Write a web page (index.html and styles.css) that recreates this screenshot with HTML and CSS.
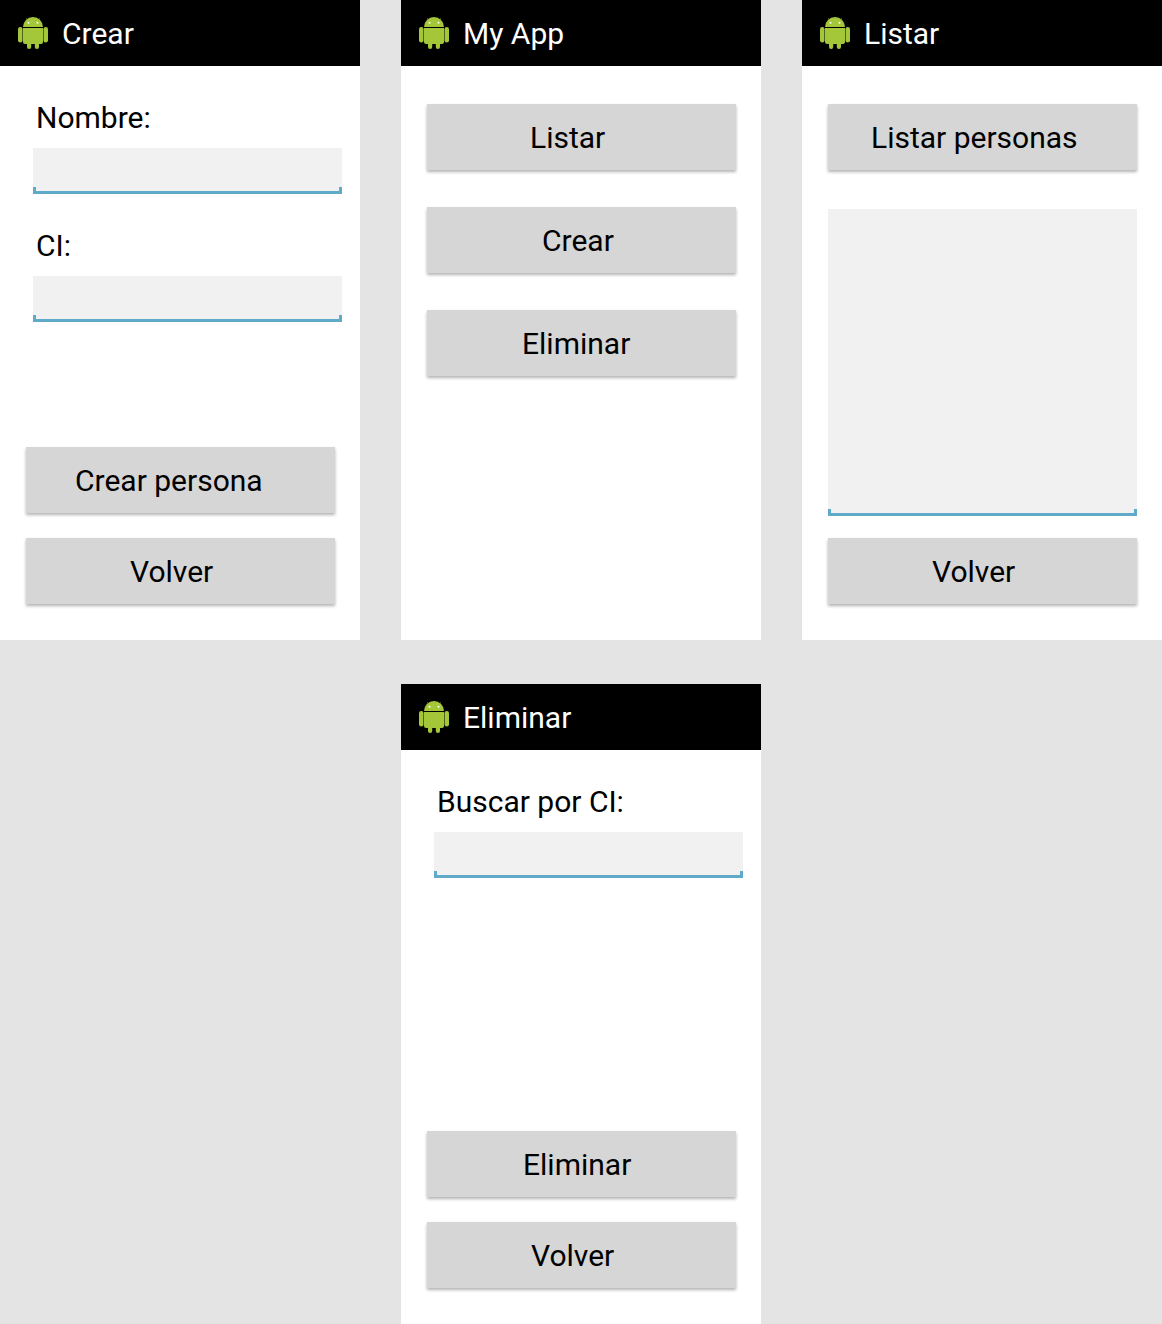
FILE: index.html
```html
<!DOCTYPE html>
<html lang="es">
<head>
    <meta charset="UTF-8">
    <meta name="viewport" content="width=device-width, initial-scale=1.0">
    <title>Pantallas de la app</title>
    <link rel="stylesheet" href="styles.css">
</head>
<body>
    <svg class="sprite" width="0" height="0" aria-hidden="true">
        <symbol id="android" viewBox="0 0 30 32">
            <path d="M5 10a10 10 0 0 1 20 0z" fill="#a4c639"/>
            <path d="M8.5 1.5l2 3M21.5 1.5l-2 3" stroke="#a4c639" stroke-width="0.8"/>
            <circle cx="10.5" cy="5.8" r="1" fill="#fff"/>
            <circle cx="19.5" cy="5.8" r="1" fill="#fff"/>
            <path d="M5 11h20v14a2 2 0 0 1-2 2H7a2 2 0 0 1-2-2z" fill="#a4c639"/>
            <rect x="0" y="10" width="4.5" height="15.5" rx="2.25" fill="#a4c639"/>
            <rect x="25.5" y="10" width="4.5" height="15.5" rx="2.25" fill="#a4c639"/>
            <rect x="9" y="25" width="4.2" height="7" rx="2.1" fill="#a4c639"/>
            <rect x="16.8" y="25" width="4.2" height="7" rx="2.1" fill="#a4c639"/>
        </symbol>
    </svg>

    <div class="board">
        <section class="screen">
            <header class="appbar">
                <svg class="appbar-icon"><use href="#android"/></svg>
                <span class="appbar-title">Crear</span>
            </header>
            <div class="content">
                <label class="field-label">Nombre:</label>
                <div class="field"></div>
                <label class="field-label field-label-next">CI:</label>
                <div class="field"></div>
                <div class="actions">
                    <button class="btn btn-crear-persona">Crear persona</button>
                    <button class="btn btn-volver">Volver</button>
                </div>
            </div>
        </section>

        <section class="screen">
            <header class="appbar">
                <svg class="appbar-icon"><use href="#android"/></svg>
                <span class="appbar-title">My App</span>
            </header>
            <div class="menu">
                <button class="btn btn-listar">Listar</button>
                <button class="btn btn-crear">Crear</button>
                <button class="btn btn-eliminar">Eliminar</button>
            </div>
        </section>

        <section class="screen">
            <header class="appbar">
                <svg class="appbar-icon"><use href="#android"/></svg>
                <span class="appbar-title">Listar</span>
            </header>
            <div class="list-content">
                <button class="btn btn-listar-personas">Listar personas</button>
                <div class="field field-area"></div>
                <button class="btn btn-volver">Volver</button>
            </div>
        </section>

        <section class="screen screen-bottom">
            <header class="appbar">
                <svg class="appbar-icon"><use href="#android"/></svg>
                <span class="appbar-title">Eliminar</span>
            </header>
            <div class="content">
                <label class="field-label">Buscar por CI:</label>
                <div class="field"></div>
                <div class="actions actions-bottom">
                    <button class="btn btn-eliminar-ci">Eliminar</button>
                    <button class="btn btn-volver">Volver</button>
                </div>
            </div>
        </section>
    </div>
</body>
</html>
```

FILE: styles.css
```css
html, body {
    margin: 0;
    padding: 0;
}
body {
    background-color: #e4e4e4;
    font-family: Roboto, sans-serif;
    color: #000;
}
.sprite {
    position: absolute;
}
.board {
    display: grid;
    grid-template-columns: repeat(3, 360px);
    column-gap: 41px;
    row-gap: 44px;
    height: 1324px;
    overflow: hidden;
}
.screen {
    width: 360px;
    height: 640px;
    background-color: #fff;
}
.screen-bottom {
    grid-column: 2;
}
.appbar {
    display: flex;
    align-items: center;
    height: 66px;
    background-color: #000;
    padding-left: 18px;
    box-sizing: border-box;
}
.appbar-icon {
    width: 30px;
    height: 32px;
    margin-top: -1px;
}
.appbar-title {
    margin-left: 14px;
    font-size: 30px;
    color: #fff;
}

.content {
    padding: 34px 0 0 33px;
}
.field-label {
    display: block;
    height: 35px;
    line-height: 35px;
    margin: 0 0 13px 3px;
    font-size: 30px;
}
.field-label-next {
    margin-top: 34px;
}
.field {
    position: relative;
    width: 309px;
    height: 46px;
    box-sizing: border-box;
    background-color: #f1f1f1;
    border-bottom: 3px solid #5eaac8;
}
.field::before,
.field::after {
    content: "";
    position: absolute;
    bottom: 0;
    width: 3px;
    height: 4px;
    background-color: #5eaac8;
}
.field::before {
    left: 0;
}
.field::after {
    right: 0;
}
.field-area {
    height: 307px;
    margin: 39px 0 22px;
}

.actions {
    display: flex;
    flex-direction: column;
    gap: 25px;
    margin: 125px 0 0 -7px;
}
.actions-bottom {
    margin-top: 253px;
}
.menu {
    display: flex;
    flex-direction: column;
    gap: 37px;
    padding: 38px 0 0 26px;
}
.list-content {
    padding: 38px 0 0 26px;
}

.btn {
    display: block;
    width: 309px;
    height: 66px;
    border: none;
    border-radius: 0;
    background-color: #d6d6d6;
    box-shadow: 0 2px 3px rgba(0, 0, 0, 0.3);
    font-family: Roboto, sans-serif;
    font-size: 30px;
    color: #000;
    text-align: left;
    padding: 0;
}
.btn-volver { padding-left: 104px; }
.btn-crear-persona { padding-left: 49px; }
.btn-listar { padding-left: 103px; }
.btn-crear { padding-left: 115px; }
.btn-eliminar { padding-left: 95px; }
.btn-eliminar-ci { padding-left: 96px; }
.btn-listar-personas { padding-left: 43px; }
```
